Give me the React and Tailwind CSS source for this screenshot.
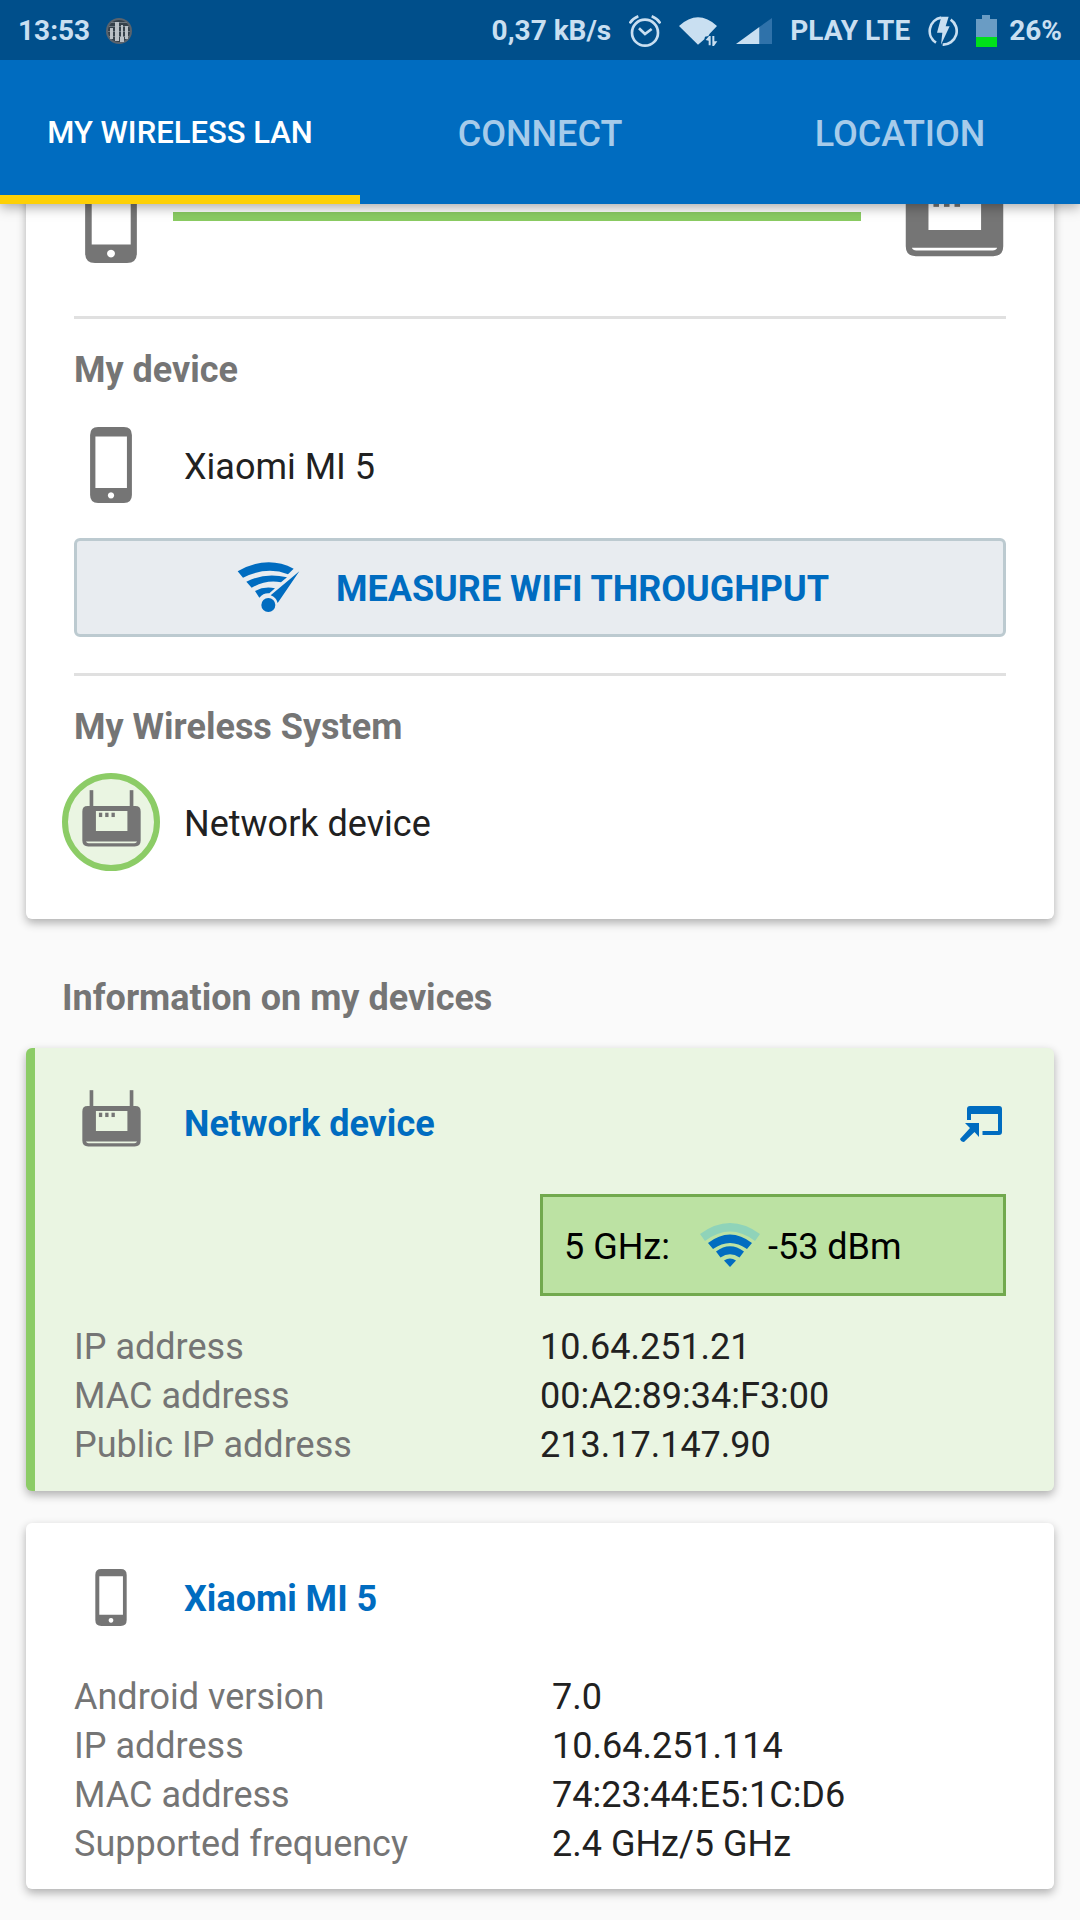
import React, { useState } from 'react';
import clsx from 'clsx';

const tabs = ['MY WIRELESS LAN', 'CONNECT', 'LOCATION'];

const routerInfo = [
  ['IP address', '10.64.251.21'],
  ['MAC address', '00:A2:89:34:F3:00'],
  ['Public IP address', '213.17.147.90'],
];

const phoneInfo = [
  ['Android version', '7.0'],
  ['IP address', '10.64.251.114'],
  ['MAC address', '74:23:44:E5:1C:D6'],
  ['Supported frequency', '2.4 GHz/5 GHz'],
];

// device icons
const PhoneIcon = ({ className }) => (
  <svg viewBox="0 0 126 229" className={className} fill="#757575" aria-hidden="true">
    <path
      fillRule="evenodd"
      d="M24 0H102Q126 0 126 24V205Q126 229 102 229H24Q0 229 0 205V24Q0 0 24 0ZM16 29V184H111V29ZM63 196.500a9.500 9.500 0 1 0 .01 0Z"
    />
  </svg>
);

const RouterIcon = ({ className }) => (
  <svg viewBox="0 0 178 195" className={className} fill="#757575" aria-hidden="true">
    <rect x="23" y="0" width="11" height="52" />
    <rect x="144" y="0" width="11" height="52" />
    <path
      fillRule="evenodd"
      d="M17 48H161Q177 48 177 64V152Q177 170 159 170H19Q1 170 1 152V64Q1 48 17 48ZM42 63V123H137V63ZM12 155Q14 160 20 160H158Q164 160 166 155Z"
    />
    <rect x="51" y="68" width="10" height="13" />
    <rect x="70" y="68" width="10" height="13" />
    <rect x="89" y="68" width="10" height="13" />
  </svg>
);

const ThroughputIcon = () => (
  <svg viewBox="0 0 189 153" className="w-[63px] h-[51px]" fill="#006cc0" aria-hidden="true">
    <path d="M2 28Q90 -22 170 20L153 37Q90 12 18 47Z" />
    <path d="M28 59Q84 30 150 46L132 61Q88 52 44 77Z" />
    <path d="M54 87Q82 72 114 79L97 94Q80 92 67 107Z" />
    <path d="M187 28L101 100Q118 106 122 123Z" />
    <circle cx="94" cy="129" r="21" />
  </svg>
);

const SignalIcon = () => (
  <svg viewBox="0 0 60 44" className="w-[60px] h-11 shrink-0" fill="#006cc0" aria-hidden="true">
    <path fill="#8fd3b9" d="M0 11Q30 -11 60 11L55 18Q30 -1 5 18Z" />
    <path d="M8 20Q30 3 52 20L47 26Q30 14 13 26Z" />
    <path d="M16 28.500Q30 18 44 28.500L39.500 34.500Q30 28 20.500 34.500Z" />
    <path d="M24 37.500Q30 33.500 36 37.500L30 44Z" />
  </svg>
);

const OpenIcon = () => (
  <svg viewBox="0 0 42 36" className="w-[42px] h-9" fill="#006cc0" aria-hidden="true">
    <path d="M7 14V3Q7 0 10 0H39Q42 0 42 3V26Q42 29 39 29H22.500V25H38V8H11V14Z" />
    <path d="M5 17H19V31L14.500 26L4 36Q1 36 0 33L10 22Z" />
  </svg>
);

// status bar icons
const AppIcon = () => (
  <svg viewBox="0 0 26 28" className="w-[26px] h-7" aria-hidden="true">
    <circle cx="13" cy="14" r="13" fill="#59636d" />
    <circle cx="13" cy="14" r="11" fill="#35414b" />
    <path fill="#6d7881" d="M5 5h16v1H5zM3 9h20v1H3zM2 14h22v1H2zM3 19h20v1H3z" />
    <path fill="#b9c0c6" d="M4 11h3v11H4zM9 5h4v19H9zM14 20h4v5h-4zM15 8h2v12h-2zM19 9h3v13h-3z" />
  </svg>
);

const AlarmIcon = () => (
  <svg viewBox="0 0 96 96" className="w-8 h-8" fill="none" stroke="#c9dff1" strokeWidth="8" aria-hidden="true">
    <circle cx="48" cy="53" r="39" />
    <path d="M30 40L48 57L68 42M2 25Q12 10 28 4M94 25Q84 10 68 4" />
  </svg>
);

const WifiStatusIcon = () => (
  <svg viewBox="0 0 117 90" className="w-[39px] h-[30px]" fill="#c9dff1" aria-hidden="true">
    <path d="M0 30Q57 -22 114 30L92 53L88 60L78 62L76 70L57 86Z" />
    <path d="M80 72L90 60H95V88H89V74ZM100 60H106V76H115L105 90H100Z" />
  </svg>
);

const CellIcon = () => (
  <svg viewBox="0 0 108 78" className="w-9 h-[26px]" aria-hidden="true">
    <path fill="#2f72aa" d="M70 27L108 0V78H70Z" />
    <path fill="#c9dff1" d="M0 78L70 27V78Z" />
  </svg>
);

const ChargeIcon = () => (
  <svg viewBox="0 0 90 90" className="w-[30px] h-[30px]" aria-hidden="true">
    <path fill="none" stroke="#c9dff1" strokeWidth="8" d="M40 5A41 41 0 0 0 24 80M68 11A41 41 0 0 1 44 86" />
    <path fill="#c9dff1" d="M40 2H62L53 31H65L39 86L43 50H27Z" />
  </svg>
);

const BatteryIcon = () => (
  <svg viewBox="0 0 21 32" className="w-[21px] h-8" aria-hidden="true">
    <path fill="#6a9cc4" d="M6 0H14V4H21V22H0V4H6Z" />
    <path fill="#00e01a" d="M0 22H21V32H0Z" />
  </svg>
);

const Divider = () => <hr className="h-[3px] border-0 bg-[#e0e0e0]" />;

const DeviceRow = ({ icon, children, className }) => (
  <div className={clsx('flex items-center h-[98px]', className)}>
    <div className="flex w-[74px] shrink-0 justify-center">{icon}</div>
    <div className="flex flex-1 items-center justify-between pt-[3px] pl-9">{children}</div>
  </div>
);

const InfoTable = ({ rows, valueClass }) => (
  <table className="mt-[27px] w-full table-fixed text-left leading-[49px]">
    <tbody>
      {rows.map(([label, value]) => (
        <tr key={label}>
          <th scope="row" className="w-1/2 p-0 font-normal text-[#757575]">{label}</th>
          <td className={clsx('p-0', valueClass)}>{value}</td>
        </tr>
      ))}
    </tbody>
  </table>
);

const cardShadow = 'shadow-[0_4px_10px_rgba(0,0,0,0.3)]';

export default function App() {
  const [activeTab, setActiveTab] = useState(tabs[0]);

  return (
    <div className="min-h-screen overflow-hidden bg-[#fafafa] font-[Roboto,sans-serif] text-[36px] text-[#212121]">
      <header className="relative z-10 bg-[#006cc0] shadow-[0_3px_12px_rgba(0,0,0,0.35)]">
        {/* Status bar */}
        <div className="flex h-[60px] items-center justify-between bg-[#004f8b] px-[18px] pt-[2px] text-[28px] font-bold text-[#c9dff1]">
          <div className="flex items-center gap-4">
            <span>13:53</span>
            <AppIcon />
          </div>
          <div className="flex items-center gap-[18px]">
            <span>0,37 kB/s</span>
            <AlarmIcon />
            <WifiStatusIcon />
            <CellIcon />
            <span>PLAY LTE</span>
            <ChargeIcon />
            <div className="flex items-center gap-3">
              <BatteryIcon />
              <span>26%</span>
            </div>
          </div>
        </div>

        {/* Tabs */}
        <nav className="grid h-36 grid-cols-3">
          {tabs.map((tab) => (
            <button
              key={tab}
              onClick={() => setActiveTab(tab)}
              className={clsx(
                'border-b-[9px] pt-3 font-medium',
                tab === activeTab ? 'border-b-[#fdd006] text-white' : 'border-b-transparent text-[#a6cbea]',
                tab.length > 10 ? 'text-[31px]' : 'text-[36px]'
              )}
            >
              {tab}
            </button>
          ))}
        </nav>
      </header>

      <main className="px-[26px] pb-8">
        {/* Connection overview, scrolled partly under the header */}
        <section className={clsx('-mt-[60px] rounded-md bg-white px-12 pt-[18px] pb-12', cardShadow)}>
          <div className="flex h-[108px] items-center">
            <div className="flex w-[74px] justify-center">
              <PhoneIcon className="w-[52px] h-[94px]" />
            </div>
            <div className="mr-[41px] ml-[25px] h-[9px] flex-1 bg-[#8acb62]" />
            <div className="flex w-[104px] justify-center">
              <RouterIcon className="w-[99px] h-[108px]" />
            </div>
          </div>
          <div className="mt-[46px]"><Divider /></div>

          <h2 className="mt-[27px] leading-[49px] font-bold text-[#757575]">My device</h2>
          <DeviceRow className="mt-[21px]" icon={<PhoneIcon className="w-[42px] h-[76px]" />}>
            <span>Xiaomi MI 5</span>
          </DeviceRow>
          <button className="mt-6 mb-9 flex h-[99px] w-full items-center justify-center gap-9 rounded-md border-[3px] border-[#bccad0] bg-[#e8ecf0] pr-3.5 font-bold text-[#006cc0]">
            <ThroughputIcon />
            <span className="pt-[3px]">MEASURE WIFI THROUGHPUT</span>
          </button>
          <Divider />

          <h2 className="mt-[27px] leading-[49px] font-bold text-[#757575]">My Wireless System</h2>
          <DeviceRow
            className="mt-[21px]"
            icon={
              <div className="flex h-[98px] w-[98px] shrink-0 items-center justify-center rounded-full border-[6px] border-[#8ccc66] bg-[#eaf5e2]">
                <RouterIcon className="w-[59px] h-[65px]" />
              </div>
            }
          >
            <span>Network device</span>
          </DeviceRow>
        </section>

        <h2 className="mt-[55px] mb-[25px] pl-9 leading-[49px] font-bold text-[#757575]">Information on my devices</h2>

        {/* Router */}
        <section className={clsx('rounded-md border-l-[9px] border-[#8ccc66] bg-[#eaf5e2] pt-[25px] pr-12 pb-[21px] pl-[39px]', cardShadow)}>
          <DeviceRow icon={<RouterIcon className="w-[59px] h-[65px]" />}>
            <h3 className="font-bold text-[#006cc0]">Network device</h3>
            <button aria-label="Open device" className="pr-1"><OpenIcon /></button>
          </DeviceRow>
          <div className="mt-[23px] ml-auto flex h-[102px] w-1/2 items-center border-[3px] border-[#72a94e] bg-[#bce2a3] pl-[21px] text-black">
            <span className="mr-[30px] pt-[3px]">5 GHz:</span>
            <SignalIcon />
            <span className="pt-[3px] pl-2">-53 dBm</span>
          </div>
          <InfoTable rows={routerInfo} />
        </section>

        {/* Phone */}
        <section className={clsx('mt-8 rounded-md bg-white px-12 pt-[25px] pb-5', cardShadow)}>
          <DeviceRow icon={<PhoneIcon className="w-8 h-[57px]" />}>
            <h3 className="font-bold text-[#006cc0]">Xiaomi MI 5</h3>
          </DeviceRow>
          <InfoTable rows={phoneInfo} valueClass="pl-3" />
        </section>
      </main>
    </div>
  );
}
